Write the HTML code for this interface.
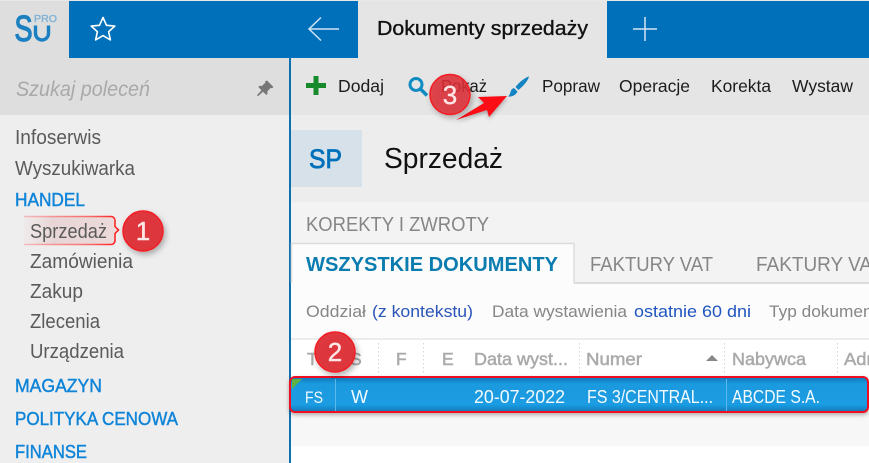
<!DOCTYPE html>
<html lang="pl"><head><meta charset="utf-8"><title>Dokumenty sprzedaży</title>
<style>
html,body{margin:0;padding:0;width:869px;height:463px;overflow:hidden;background:#fff}
svg{display:block}
text{font-family:"Liberation Sans",sans-serif}
</style></head><body>
<svg xmlns="http://www.w3.org/2000/svg" width="869" height="463" viewBox="0 0 869 463">
<defs>
<linearGradient id="row" x1="0" y1="0" x2="0" y2="1"><stop offset="0" stop-color="#1277b5"/><stop offset=".2" stop-color="#1a9ae0"/><stop offset=".8" stop-color="#1a9ce2"/><stop offset="1" stop-color="#1376b3"/></linearGradient>
<linearGradient id="call" x1="0" y1="0" x2="1" y2="0"><stop offset="0" stop-color="#f0e4e4" stop-opacity=".5"/><stop offset=".3" stop-color="#e8d6d6"/><stop offset="1" stop-color="#ecdada"/></linearGradient>
<linearGradient id="callb" x1="0" y1="0" x2="1" y2="0"><stop offset="0" stop-color="#f33" stop-opacity=".25"/><stop offset=".7" stop-color="#f33" stop-opacity=".7"/><stop offset="1" stop-color="#f11"/></linearGradient>
<filter id="sh" x="-30%" y="-30%" width="170%" height="170%"><feDropShadow dx="2" dy="3" stdDeviation="3" flood-color="#000" flood-opacity=".3"/></filter>
<filter id="sh2" x="-10%" y="-30%" width="120%" height="170%"><feDropShadow dx="0" dy="2" stdDeviation="2" flood-color="#000" flood-opacity=".3"/></filter>
</defs>

<!-- backgrounds -->
<rect width="869" height="463" fill="#fff"/>
<rect width="869" height="58" fill="#0070ba"/>
<rect width="869" height="1" fill="#e8e8e8"/>
<rect y="1" width="69" height="57" fill="#dedede"/>
<rect x="358" y="1" width="249" height="57" fill="#e5e5e5"/>
<rect y="58" width="289" height="57" fill="#dedede"/>
<rect y="115" width="289" height="348" fill="#eeeeee"/>
<rect x="289" y="58" width="2" height="405" fill="#0f70b0"/>
<rect x="291" y="58" width="578" height="57" fill="#e5e5e5"/>
<rect x="291" y="115" width="578" height="87" fill="#ededed"/>
<rect x="291" y="202" width="578" height="81" fill="#f3f3f3"/>
<rect x="291" y="283" width="578" height="57" fill="#fcfcfc"/>
<rect x="291" y="282" width="578" height="2" fill="#dcdcdc"/>
<path d="M291.5 283V243.500H574V283" fill="#fcfcfc" stroke="#dcdcdc" stroke-width="1.500"/>
<rect x="291" y="283" width="283" height="3" fill="#fcfcfc"/>
<rect x="291" y="338" width="578" height="2" fill="#ececec"/>
<rect x="291" y="340" width="578" height="36" fill="#fff"/>
<rect x="291" y="412" width="578" height="34" fill="#f7f7f7"/>

<!-- logo -->
<text x="14.500" y="41" font-size="36" fill="#1b80c2" stroke="#1b80c2" stroke-width="1.300" textLength="18" lengthAdjust="spacingAndGlyphs">S</text>
<text x="34" y="22" font-size="10" fill="#7fb2d8" stroke="#7fb2d8" stroke-width=".35" textLength="23" lengthAdjust="spacingAndGlyphs">PRO</text>
<path d="M35.500 25.500V33.500a6.500 6.500 0 0 0 13 0V25.500" fill="none" stroke="#1b80c2" stroke-width="3.400"/>
<!-- star -->
<path d="M103 17.500l3.500 7.800 8.300.8-6.200 5.600 1.800 8.200-7.400-4.300-7.400 4.300 1.800-8.200-6.200-5.600 8.300-.8z" fill="none" stroke="#fff" stroke-width="1.600" stroke-linejoin="round"/>
<!-- back arrow -->
<path d="M339 29H309M321 17.500L309 29l12 11.500" fill="none" stroke="#cfe3f2" stroke-width="1.500"/>
<!-- plus -->
<path d="M633 29H657M645 17V41" stroke="#d5e6f3" stroke-width="1.500" fill="none"/>
<text x="377" y="35" font-size="20" fill="#111" stroke="#111" stroke-width=".35" textLength="211" lengthAdjust="spacingAndGlyphs">Dokumenty sprzedaży</text>

<!-- search -->
<text x="16" y="96" font-size="21.500" font-style="italic" fill="#a9a9a9" textLength="134" lengthAdjust="spacingAndGlyphs">Szukaj poleceń</text>
<path d="M267 80.500l6.500 6.500-1.500 1.200-1.300-.3-3.400 3.600.2 2.300-1.200 1.200-3.300-3.300-5 4.500-1-1 4.500-5-3.200-3.200 1.200-1.200 2.300.2 3.600-3.400-.3-1.300z" fill="#777"/>

<!-- sidebar -->
<g font-size="20" fill="#5a5a5a">
<text x="15" y="144" textLength="86" lengthAdjust="spacingAndGlyphs">Infoserwis</text>
<text x="15" y="175" textLength="120" lengthAdjust="spacingAndGlyphs">Wyszukiwarka</text>
<text x="30" y="268" textLength="103" lengthAdjust="spacingAndGlyphs">Zamówienia</text>
<text x="30" y="298" textLength="53" lengthAdjust="spacingAndGlyphs">Zakup</text>
<text x="30" y="328" textLength="70" lengthAdjust="spacingAndGlyphs">Zlecenia</text>
<text x="30" y="358" textLength="94" lengthAdjust="spacingAndGlyphs">Urządzenia</text>
</g>
<g font-size="18.500" fill="#0f84d8" stroke="#0f84d8" stroke-width=".45">
<text x="15" y="206" textLength="70" lengthAdjust="spacingAndGlyphs">HANDEL</text>
<text x="15" y="392" textLength="87" lengthAdjust="spacingAndGlyphs">MAGAZYN</text>
<text x="15" y="425" textLength="163" lengthAdjust="spacingAndGlyphs">POLITYKA CENOWA</text>
<text x="15" y="458" textLength="72" lengthAdjust="spacingAndGlyphs">FINANSE</text>
</g>

<!-- callout 1 -->
<path d="M24 216.500H111a4 4 0 0 1 4 4V226.500l3.500 3.500-3.500 3.500V240a4 4 0 0 1-4 4.500H24z" fill="url(#call)"/>
<path d="M24 216.500H111a4 4 0 0 1 4 4V226.500l3.500 3.500-3.500 3.500V240a4 4 0 0 1-4 4.500H24" fill="none" stroke="url(#callb)" stroke-width="1.500"/>
<text x="30" y="238" font-size="20" fill="#5a5a5a" textLength="77" lengthAdjust="spacingAndGlyphs">Sprzedaż</text>

<!-- toolbar -->
<path d="M316 76V95M306 85.500H326" stroke="#178a2b" stroke-width="5" fill="none"/>
<circle cx="416" cy="84.500" r="6" fill="none" stroke="#0f8bc2" stroke-width="3"/>
<path d="M420.500 89L427 95.500" stroke="#0f8bc2" stroke-width="3.500" fill="none"/>
<path d="M529 76.500C526 77 519 82 515.500 87L518.500 90C523 86.500 528.500 80 529 76.500z" fill="#1484c2"/>
<path d="M514 88L517.500 91.500C516 95 512 97 508 96.500C510 95 510.500 92 511 90.500C511.500 89 513 88.500 514 88z" fill="#1484c2"/>
<g font-size="17.500" fill="#1c1c1c">
<text x="338" y="92" textLength="46" lengthAdjust="spacingAndGlyphs">Dodaj</text>
<text x="441" y="92" textLength="46" lengthAdjust="spacingAndGlyphs">Pokaż</text>
<text x="542" y="92" textLength="58" lengthAdjust="spacingAndGlyphs">Popraw</text>
<text x="619" y="92" textLength="71" lengthAdjust="spacingAndGlyphs">Operacje</text>
<text x="711" y="92" textLength="60" lengthAdjust="spacingAndGlyphs">Korekta</text>
<text x="792" y="92" textLength="61" lengthAdjust="spacingAndGlyphs">Wystaw</text>
</g>

<!-- title -->
<rect x="291" y="130" width="71" height="57" fill="#d6e1e9"/>
<text x="309" y="168" font-size="27" fill="#0070ba" stroke="#0070ba" stroke-width=".8" textLength="33" lengthAdjust="spacingAndGlyphs">SP</text>
<text x="384" y="168" font-size="29" fill="#111" textLength="119" lengthAdjust="spacingAndGlyphs">Sprzedaż</text>

<!-- tabs -->
<g font-size="20.500" fill="#868686">
<text x="306" y="231" textLength="183" lengthAdjust="spacingAndGlyphs">KOREKTY I ZWROTY</text>
<text x="590" y="271" textLength="123" lengthAdjust="spacingAndGlyphs">FAKTURY VAT</text>
<text x="756" y="271" textLength="116" lengthAdjust="spacingAndGlyphs">FAKTURY VA</text>
</g>
<text x="306" y="271" font-size="20" font-weight="bold" fill="#0a7cb0" textLength="252" lengthAdjust="spacingAndGlyphs">WSZYSTKIE DOKUMENTY</text>

<!-- filters -->
<g font-size="16.500">
<text x="306" y="317" fill="#868686" textLength="60" lengthAdjust="spacingAndGlyphs">Oddział</text>
<text x="372" y="317" fill="#2a55b8" textLength="101" lengthAdjust="spacingAndGlyphs">(z kontekstu)</text>
<text x="492" y="317" fill="#868686" textLength="135" lengthAdjust="spacingAndGlyphs">Data wystawienia</text>
<text x="634" y="317" fill="#1f55c0" textLength="117" lengthAdjust="spacingAndGlyphs">ostatnie 60 dni</text>
<text x="769" y="317" fill="#868686" textLength="118" lengthAdjust="spacingAndGlyphs">Typ dokumentu</text>
</g>

<!-- grid header -->
<g font-size="17.500" fill="#aaa" stroke="#aaa" stroke-width=".5">
<text x="307" y="365">T</text>
<text x="350" y="365">S</text>
<text x="396" y="365">F</text>
<text x="442" y="365">E</text>
<text x="474" y="365" textLength="94" lengthAdjust="spacingAndGlyphs">Data wyst...</text>
<text x="586" y="365" textLength="56" lengthAdjust="spacingAndGlyphs">Numer</text>
<text x="732" y="365" textLength="74" lengthAdjust="spacingAndGlyphs">Nabywca</text>
<text x="844" y="365" textLength="48" lengthAdjust="spacingAndGlyphs">Adres</text>
</g>
<path d="M706 361L712 355L718 361z" fill="#888"/>
<path d="M378.500 343V373M423.500 343V373M579.500 343V373M724.500 343V373M837.500 343V373" stroke="#d5d5d5" stroke-width="1" stroke-dasharray="1.500 2.500" fill="none"/>

<!-- row -->
<rect x="290" y="377" width="578" height="35" rx="5" fill="url(#row)" stroke="#f01020" stroke-width="2" filter="url(#sh2)"/>
<path d="M292 379H302L292 389z" fill="#5fb246"/>
<path d="M335.500 379V411M726.500 379V411" stroke="#5cb8ea" stroke-width="1"/>
<g font-size="18" fill="#f4fbff">
<text x="305" y="403" font-size="17" textLength="18" lengthAdjust="spacingAndGlyphs">FS</text>
<text x="351" y="403" textLength="17" lengthAdjust="spacingAndGlyphs">W</text>
<text x="474" y="403" textLength="91" lengthAdjust="spacingAndGlyphs">20-07-2022</text>
<text x="587" y="403" textLength="126" lengthAdjust="spacingAndGlyphs">FS 3/CENTRAL...</text>
<text x="732" y="403" textLength="88" lengthAdjust="spacingAndGlyphs">ABCDE S.A.</text>
</g>

<!-- arrow -->
<path d="M456 120L484 103L478 97L507 96L489 117L487 110z" fill="#fb0f17" filter="url(#sh2)"/>

<!-- badges -->
<g filter="url(#sh)">
<circle cx="143" cy="231" r="20" fill="#de2f35" fill-opacity=".95" stroke="#f31d23" stroke-width="1.500"/>
<circle cx="335" cy="352" r="20" fill="#de2f35" fill-opacity=".95" stroke="#f31d23" stroke-width="1.500"/>
<circle cx="450" cy="94.500" r="20" fill="#de2f35" fill-opacity=".85" stroke="#f31d23" stroke-width="1.500"/>
</g>
<g font-size="26" fill="#ffe6e6" stroke="#ffe6e6" stroke-width=".4" text-anchor="middle">
<text x="143" y="240">1</text>
<text x="335" y="361">2</text>
<text x="450" y="104">3</text>
</g>
</svg>
</body></html>
